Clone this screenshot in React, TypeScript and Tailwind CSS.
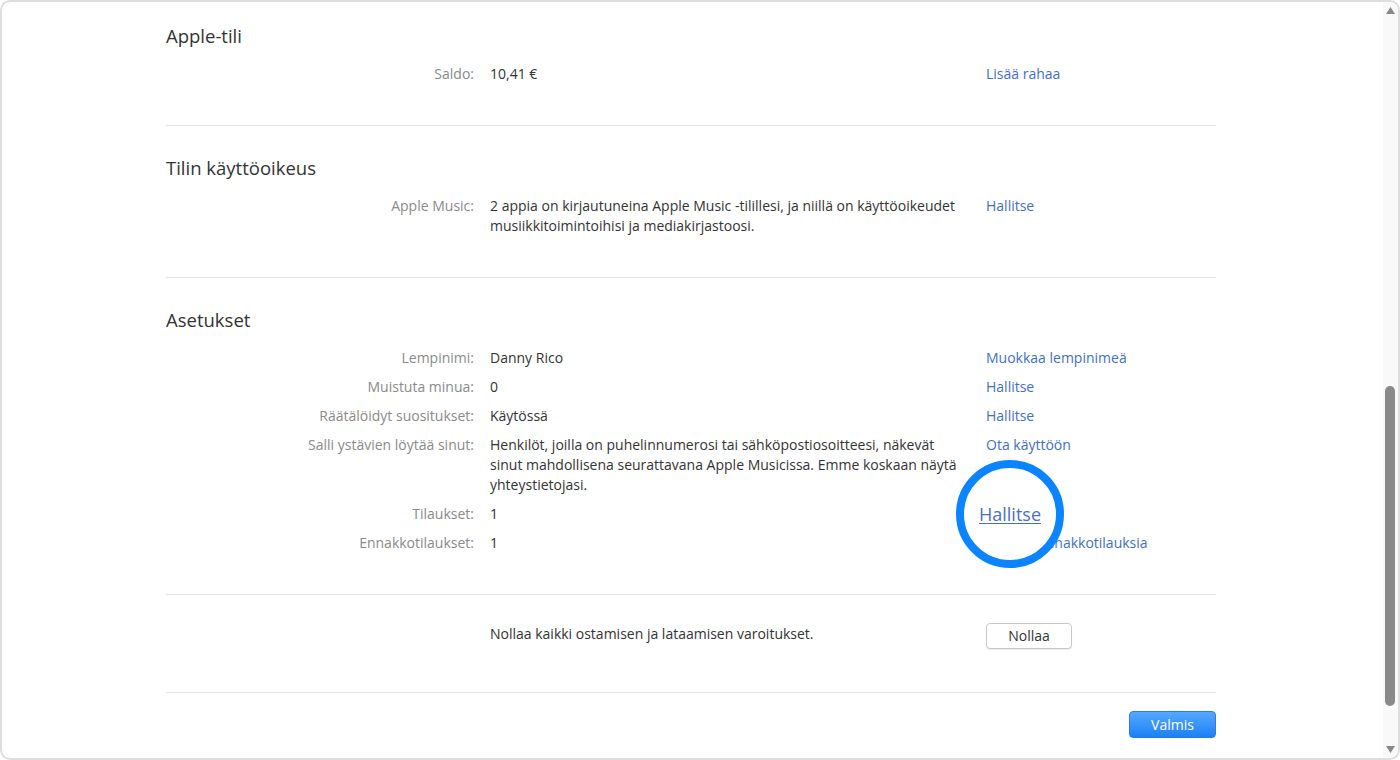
import React from 'react';

type Row = {
  label: string;
  value: React.ReactNode;
  link?: string;
  circled?: boolean;
};

function Divider() {
  return <div className="h-px bg-[#e3e3e3]" />;
}

function Section({ title, rows }: { title: string; rows: Row[] }) {
  return (
    <div className="pt-[28px] pb-[41px]">
      <h2 className="text-[18.5px] leading-[28px] text-[#333]">{title}</h2>
      <div className="mt-[14px] grid grid-cols-[308px_480px_230px] gap-x-4 gap-y-[9px] text-[14px] leading-[20px]">
        {rows.map(r => (
          <React.Fragment key={r.label}>
            <div className="text-right text-[#8a8a8a]">{r.label}</div>
            <div className="text-[#333]">{r.value}</div>
            <div className="relative">
              {r.link && <a className="text-[#3f6fc6]">{r.link}</a>}
              {r.circled && (
                <div className="absolute left-[-30px] top-[-44px] z-10 flex h-[108px] w-[108px] items-center justify-center rounded-full border-[8px] border-[#0a84ff] bg-white">
                  <span className="text-[18px] leading-[24px] text-[#4a6fc8] underline underline-offset-2">Hallitse</span>
                </div>
              )}
            </div>
          </React.Fragment>
        ))}
      </div>
    </div>
  );
}

export default function App() {
  return (
    <div className="h-[760px] w-[1400px] bg-white" style={{ fontFamily: '"Open Sans", "Noto Sans", sans-serif' }}>
      <div className="relative flex h-full overflow-hidden rounded-[10px] border-2 border-[#dedede] bg-white">
        <div className="flex-1 pl-[164px] pr-[167px]">
          <div className="-mt-[8px]">
            <Section
              title="Apple-tili"
              rows={[{ label: 'Saldo:', value: '10,41 €', link: 'Lisää rahaa' }]}
            />
          </div>
          <Divider />
          <Section
            title="Tilin käyttöoikeus"
            rows={[
              {
                label: 'Apple Music:',
                value: '2 appia on kirjautuneina Apple Music -tilillesi, ja niillä on käyttöoikeudet musiikkitoimintoihisi ja mediakirjastoosi.',
                link: 'Hallitse',
              },
            ]}
          />
          <Divider />
          <Section
            title="Asetukset"
            rows={[
              { label: 'Lempinimi:', value: 'Danny Rico', link: 'Muokkaa lempinimeä' },
              { label: 'Muistuta minua:', value: '0', link: 'Hallitse' },
              { label: 'Räätälöidyt suositukset:', value: 'Käytössä', link: 'Hallitse' },
              {
                label: 'Salli ystävien löytää sinut:',
                value: 'Henkilöt, joilla on puhelinnumerosi tai sähköpostiosoitteesi, näkevät sinut mahdollisena seurattavana Apple Musicissa. Emme koskaan näytä yhteystietojasi.',
                link: 'Ota käyttöön',
              },
              { label: 'Tilaukset:', value: '1', link: 'Hallitse', circled: true },
              { label: 'Ennakkotilaukset:', value: '1', link: 'Hallitse ennakkotilauksia' },
            ]}
          />
          <Divider />
          <div className="grid grid-cols-[308px_480px_230px] gap-x-4 pt-[28px] pb-[43px] text-[14px] leading-[20px]">
            <div />
            <div className="pt-[1px] text-[#333]">Nollaa kaikki ostamisen ja lataamisen varoitukset.</div>
            <div>
              <button className="h-[26px] w-[86px] rounded-[4px] border border-[#c9c9c9] bg-white text-[14px] text-[#333] shadow-[0_1px_1px_rgba(0,0,0,0.08)]">
                Nollaa
              </button>
            </div>
          </div>
          <Divider />
          <div className="flex justify-end pt-[18px]">
            <button className="h-[27px] w-[87px] rounded-[4px] border border-[#2a7de6] bg-gradient-to-b from-[#54a9ff] to-[#1b80f6] text-[14px] text-white">
              Valmis
            </button>
          </div>
        </div>
        <div className="relative w-[15px] bg-[#f9f9f9]">
          <svg className="absolute left-[3px] top-[5px]" width="9" height="7" viewBox="0 0 9 7">
            <path d="M4.5 0 L9 7 L0 7 Z" fill="#8a8a8a" />
          </svg>
          <div className="absolute left-[2px] top-[384px] h-[320px] w-[10px] rounded-full bg-[#8a8a8a]" />
          <svg className="absolute left-[3px] bottom-[5px]" width="9" height="7" viewBox="0 0 9 7">
            <path d="M0 0 L9 0 L4.5 7 Z" fill="#8a8a8a" />
          </svg>
        </div>
      </div>
    </div>
  );
}
